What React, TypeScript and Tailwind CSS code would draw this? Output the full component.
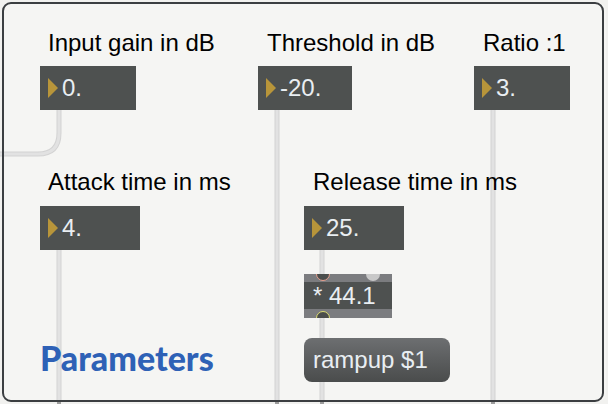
import React from 'react';

type NumBoxProps = { value: string; width: string };

function NumberBox({ value, width }: NumBoxProps) {
  return (
    <div className={`flex h-[44px] items-center bg-[#4e5150] pl-[8px] ${width}`}>
      <div className="h-0 w-0 border-y-[10px] border-l-[10px] border-y-transparent border-l-[#b8953a]" />
      <span className="ml-[4px] text-[24px] leading-none text-[#e9eef2]">{value}</span>
    </div>
  );
}

function Label({ text, pad }: { text: string; pad: string }) {
  return <div className={`whitespace-nowrap text-[24px] leading-none text-black ${pad}`}>{text}</div>;
}

export default function App() {
  // patch cords, page coordinates
  const cords = [
    'M59 110 V133 Q59 154 38 154 H-4',
    'M277 110 V402',
    'M493 110 V402',
    'M59 250 V402',
    'M322 250 V274',
    'M322 318 V338',
    'M322 382 V402',
  ];

  return (
    <div className="relative h-[404px] w-[608px] overflow-hidden bg-[#f1f1ef] p-[2px] font-['Liberation_Sans',Arial,sans-serif]">
      <div className="h-full w-full rounded-[9px] bg-[#f5f5f3]" />

      <svg className="absolute left-0 top-0" width="608" height="404" viewBox="0 0 608 404">
        {cords.map((d, i) => (
          <g key={i} fill="none">
            <path d={d} stroke="#d3d3d3" strokeWidth="5" />
            <path d={d} stroke="#e2e2e2" strokeWidth="3" />
          </g>
        ))}
        {[59, 277, 322, 493].map((x) => (
          <line key={x} x1={x} y1={402} x2={x} y2={404} stroke="#9d9d9d" strokeWidth="4" />
        ))}
      </svg>

      {/* patcher objects on the canvas */}
      <div className="absolute left-[40px] top-[31px] flex flex-col gap-[11px]">
        <Label text="Input gain in dB" pad="pl-[8px]" />
        <NumberBox value="0." width="w-[96px]" />
      </div>

      <div className="absolute left-[258px] top-[31px] flex flex-col gap-[11px]">
        <Label text="Threshold in dB" pad="pl-[9px]" />
        <NumberBox value="-20." width="w-[94px]" />
      </div>

      <div className="absolute left-[474px] top-[31px] flex flex-col gap-[11px]">
        <Label text="Ratio :1" pad="pl-[9px]" />
        <NumberBox value="3." width="w-[96px]" />
      </div>

      <div className="absolute left-[40px] top-[170px] flex flex-col gap-[12px]">
        <Label text="Attack time in ms" pad="pl-[8px]" />
        <NumberBox value="4." width="w-[100px]" />
      </div>

      <div className="absolute left-[304px] top-[170px] flex flex-col">
        <Label text="Release time in ms" pad="pl-[9px]" />
        <div className="mt-[12px]">
          <NumberBox value="25." width="w-[100px]" />
        </div>

        {/* object box */}
        <div className="relative mt-[24px] flex h-[44px] w-[88px] flex-col overflow-hidden">
          <div className="h-[8px] bg-[#7b7c7f]" />
          <div className="flex h-[27px] items-center bg-[#4e5150] pl-[9px] text-[24px] leading-none text-[#e9eef2]">
            * 44.1
          </div>
          <div className="h-[9px] bg-[#7b7c7f]" />
          <div className="absolute left-[12px] top-[-7px] h-[14px] w-[14px] rounded-full border-[1.5px] border-[#e6a08e] bg-[#4a4d4c]" />
          <div className="absolute left-[62px] top-[-7px] h-[14px] w-[14px] rounded-full bg-[#c8c8c8]" />
          <div className="absolute bottom-[-7px] left-[12px] h-[14px] w-[14px] rounded-full border-[1.5px] border-[#dede72] bg-[#4a4d4c]" />
        </div>

        {/* message box */}
        <div className="mt-[20px] flex h-[44px] w-[146px] items-center rounded-[8px] bg-gradient-to-b from-[#6d6f71] to-[#4a4c4c] pl-[9px] text-[24px] leading-none text-[#e9eef2]">
          rampup $1
        </div>
      </div>

      <div className="absolute left-[40px] top-[341px] font-['Lato',sans-serif] text-[34px] font-black leading-none text-[#2e61b6]">
        Parameters
      </div>

      <div className="pointer-events-none absolute left-[2px] top-[2px] h-[400px] w-[602px] rounded-[9px] border-2 border-[#3b3e41]" />
    </div>
  );
}
